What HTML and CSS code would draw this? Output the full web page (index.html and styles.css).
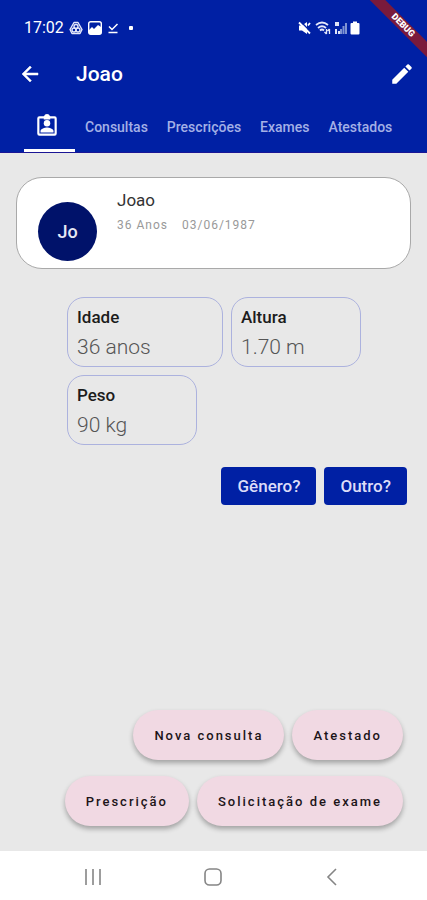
FILE: index.html
```html
<!DOCTYPE html>
<html lang="pt-BR">
<head>
    <meta charset="UTF-8">
    <meta name="viewport" content="width=device-width, initial-scale=1.0">
    <title>Joao</title>
    <link rel="stylesheet" href="styles.css">
</head>
<body>

    <div class="app">
        <header class="header">
            <div class="status-bar">
                <div class="status-left">
                    <span class="clock">17:02</span>
                    <svg width="14" height="14" viewBox="0 0 14 14" fill="none" stroke="#e4e8fa" stroke-width="1.4">
                        <path d="M5 1.5h4l4 7-2 4H3l-2-4z" stroke-linejoin="round"/>
                        <circle cx="7" cy="5.5" r="2"/>
                        <circle cx="5" cy="9" r="2"/>
                        <circle cx="9" cy="9" r="2"/>
                    </svg>
                    <svg width="14" height="14" viewBox="0 0 14 14">
                        <rect x="0.7" y="0.7" width="12.6" height="12.6" rx="2" fill="none" stroke="#fff" stroke-width="1.4"/>
                        <path d="M1 9l3-3 2 2 4-4 3 2v7H1z" fill="#fff"/>
                    </svg>
                    <svg width="12" height="14" viewBox="0 0 12 14" fill="none" stroke="#fff" stroke-width="1.5">
                        <path d="M2 5.5l3 3L10.5 3M1.5 11.5h9"/>
                    </svg>
                    <span class="dot"></span>
                </div>
                <div class="status-right">
                    <svg width="14" height="14" viewBox="0 0 14 14">
                        <path d="M1 4.5h3l5-3.5v12L4 9.5H1z" fill="#fff"/>
                        <path d="M2 0l12 12" stroke="#0020a4" stroke-width="1.5"/>
                        <path d="M1 1.5l11 11M10 4.5l2-2.5" stroke="#fff" stroke-width="1.8"/>
                    </svg>
                    <svg width="16" height="14" viewBox="0 0 16 14" fill="none" stroke="#e4e8fa" stroke-width="1.8">
                        <path d="M1 4q6-5 12 0M3 7q4-3.5 8 0M5 9.5q2-2 4 0"/>
                        <path d="M11.5 8v5M9.5 11l2 2M14.5 13V8M12.5 10l2-2" stroke-width="1.3"/>
                    </svg>
                    <svg width="13" height="14" viewBox="0 0 13 14">
                        <path d="M1 1h4v4H1zM1 8h2v5H1zM4 10h2v3H4z" fill="#dfe4f8"/>
                        <path d="M6 8h2v5H6zM8.5 5h2v8h-2zM11 2h2v11h-2z" fill="#7f93d3"/>
                    </svg>
                    <svg width="10" height="14" viewBox="0 0 10 14" fill="#fff">
                        <path d="M3 0.5h4v1.5H3z"/>
                        <rect x="0.5" y="2" width="9" height="11.5" rx="1"/>
                    </svg>
                </div>
            </div>

            <div class="app-bar">
                <button class="icon-btn" aria-label="Voltar">
                    <svg width="24" height="24" viewBox="0 0 24 24" fill="#fff">
                        <path d="M20 11H7.83l5.59-5.59L12 4l-8 8 8 8 1.41-1.41L7.83 13H20z" stroke="#fff" stroke-width="0.5"/>
                    </svg>
                </button>
                <h1 class="title">Joao</h1>
                <button class="icon-btn" aria-label="Editar">
                    <svg width="26" height="26" viewBox="0 0 24 24" fill="#fff">
                        <path d="M3 17.25V21h3.75L17.81 9.94l-3.75-3.75zM20.71 7.04a1 1 0 0 0 0-1.41l-2.34-2.34a1 1 0 0 0-1.41 0l-1.83 1.83 3.75 3.75z"/>
                    </svg>
                </button>
            </div>

            <nav class="tabs">
                <a class="tab tab-active" href="#" aria-label="Paciente">
                    <svg width="26" height="26" viewBox="0 0 24 24" fill="#fff">
                        <path fill-rule="evenodd" d="M19 3h-4.18a3 3 0 0 0-5.64 0H5a2 2 0 0 0-2 2v14a2 2 0 0 0 2 2h14a2 2 0 0 0 2-2V5a2 2 0 0 0-2-2zM5 5h14v14H5z"/>
                        <path d="M9 3h6v3H9z"/>
                        <circle cx="12" cy="9.5" r="3"/>
                        <path d="M6 18v-1.5c0-2 4-3.2 6-3.2s6 1.2 6 3.2V18z"/>
                    </svg>
                </a>
                <a class="tab" href="#">Consultas</a>
                <a class="tab" href="#">Prescrições</a>
                <a class="tab" href="#">Exames</a>
                <a class="tab" href="#">Atestados</a>
            </nav>
        </header>

        <main class="content">
            <section class="card">
                <div class="avatar">Jo</div>
                <div class="card-text">
                    <div class="card-name">Joao</div>
                    <div class="card-info">
                        <span>36 Anos</span>
                        <span>03/06/1987</span>
                    </div>
                </div>
            </section>

            <section class="data">
                <div class="data-box data-box-wide">
                    <div class="data-label">Idade</div>
                    <div class="data-value">36 anos</div>
                </div>
                <div class="data-box">
                    <div class="data-label">Altura</div>
                    <div class="data-value">1.70 m</div>
                </div>
                <div class="data-box">
                    <div class="data-label">Peso</div>
                    <div class="data-value">90 kg</div>
                </div>
            </section>

            <div class="questions">
                <button class="btn">Gênero?</button>
                <button class="btn">Outro?</button>
            </div>

            <div class="actions">
                <button class="fab">Nova consulta</button>
                <button class="fab">Atestado</button>
                <button class="fab">Prescrição</button>
                <button class="fab">Solicitação de exame</button>
            </div>
        </main>

        <footer class="nav-bar">
            <button class="nav-btn" aria-label="Recentes">
                <svg width="18" height="18" viewBox="0 0 18 18" stroke="#858585" stroke-width="1.6">
                    <path d="M2 1v16M9 1v16M16 1v16"/>
                </svg>
            </button>
            <button class="nav-btn" aria-label="Início">
                <svg width="18" height="18" viewBox="0 0 18 18" fill="none" stroke="#858585" stroke-width="1.6">
                    <rect x="1" y="1" width="16" height="16" rx="4.5"/>
                </svg>
            </button>
            <button class="nav-btn" aria-label="Voltar">
                <svg width="18" height="18" viewBox="0 0 18 18" fill="none" stroke="#858585" stroke-width="1.6">
                    <path d="M13 1L5 9l8 8"/>
                </svg>
            </button>
        </footer>

        <div class="debug">DEBUG</div>
    </div>

</body>
</html>
```
FILE: styles.css
```css
* {
    box-sizing: border-box;
}

body {
    font-family: Roboto, "Noto Sans", sans-serif;
    background-color: #e8e8e8;
    margin: 0;
}

button {
    font-family: inherit;
    border: none;
    cursor: pointer;
}

svg {
    display: block;
}

.app {
    position: relative;
    display: flex;
    flex-direction: column;
    min-height: 100vh;
    overflow: hidden;
}

/* header */
.header {
    background-color: #0020a4;
    color: white;
    border-bottom: 1px solid #1a1595;
}

.status-bar {
    display: flex;
    justify-content: space-between;
    align-items: center;
    height: 48px;
    padding: 7px 67px 0 24px;
}

.status-left {
    display: flex;
    align-items: center;
    gap: 5px;
}

.status-right {
    display: flex;
    align-items: center;
    gap: 3px;
}

.clock {
    font-size: 16px;
    line-height: 20px;
}

.dot {
    width: 4px;
    height: 4px;
    margin-left: 5px;
    border-radius: 1px;
    background-color: white;
}

.app-bar {
    display: flex;
    align-items: center;
    height: 52px;
    padding: 0 12px 0 18px;
}

.icon-btn {
    padding: 0;
    background: none;
}

.title {
    flex: 1;
    margin: 0 0 0 34px;
    font-size: 21px;
    font-weight: 500;
}

.tabs {
    display: flex;
    gap: 1px;
    height: 52px;
    padding-left: 24px;
}

.tab {
    display: flex;
    align-items: center;
    padding: 5px 9px 0;
    border-bottom: 3px solid transparent;
    color: #a3b0e6;
    font-size: 14px;
    font-weight: 500;
    text-decoration: none;
}

.tab-active {
    padding: 3px 15px 0 10px;
    border-bottom-color: white;
}

/* patient */
.content {
    flex: 1;
    display: flex;
    flex-direction: column;
    padding: 24px 16px;
}

.card {
    display: flex;
    gap: 20px;
    height: 92px;
    padding: 11px 21px;
    background-color: white;
    border: 1px solid #a9a9a9;
    border-radius: 26px;
}

.avatar {
    display: flex;
    align-items: center;
    justify-content: center;
    width: 59px;
    height: 59px;
    margin-top: 13px;
    border-radius: 50%;
    background-color: #00126a;
    color: #e6e8f4;
    font-size: 18px;
    font-weight: 500;
}

.card-name {
    color: #333;
    font-size: 17px;
    line-height: 22px;
}

.card-info {
    display: flex;
    gap: 14px;
    margin-top: 4px;
    color: #999;
    font-size: 12px;
    line-height: 20px;
    letter-spacing: 1px;
}

.data {
    display: flex;
    flex-wrap: wrap;
    gap: 8px;
    margin-top: 28px;
    padding: 0 48px 0 51px;
}

.data-box {
    min-width: 130px;
    height: 70px;
    padding: 7px 9px 0;
    border: 1px solid #acb2de;
    border-radius: 17px;
}

.data-box-wide {
    min-width: 156px;
}

.data-label {
    color: #1c1c1c;
    font-size: 17px;
    font-weight: 500;
    line-height: 24px;
}

.data-value {
    color: #555;
    font-size: 21px;
    font-weight: 300;
    line-height: 36px;
}

.questions {
    display: flex;
    justify-content: flex-end;
    gap: 8px;
    margin-top: 22px;
    padding-right: 4px;
}

.btn {
    height: 38px;
    padding: 0 16px;
    border-radius: 4px;
    background-color: #0020a4;
    color: #dcdcf8;
    font-size: 17px;
    font-weight: 500;
}

/* bottom buttons */
.actions {
    display: flex;
    flex-wrap: wrap;
    justify-content: flex-end;
    gap: 16px 8px;
    margin-top: auto;
    padding: 0 8px 1px 40px;
}

.fab {
    height: 50px;
    padding: 0 21px;
    border-radius: 25px;
    background-color: #f1d9e3;
    color: #1c1418;
    font-size: 13px;
    font-weight: 500;
    letter-spacing: 2px;
    box-shadow: 0 3px 5px rgba(0, 0, 0, 0.3);
}

.nav-bar {
    display: flex;
    justify-content: space-between;
    align-items: center;
    height: 49px;
    padding: 2px 86px 0 84px;
    background-color: white;
}

.nav-btn {
    padding: 0;
    background: none;
}

/* debug ribbon */
.debug {
    position: absolute;
    top: 20px;
    right: -36px;
    width: 120px;
    height: 11px;
    transform: rotate(45deg);
    background-color: #7a1a3c;
    color: white;
    font-size: 9px;
    font-weight: 900;
    line-height: 11px;
    text-align: center;
}
```
